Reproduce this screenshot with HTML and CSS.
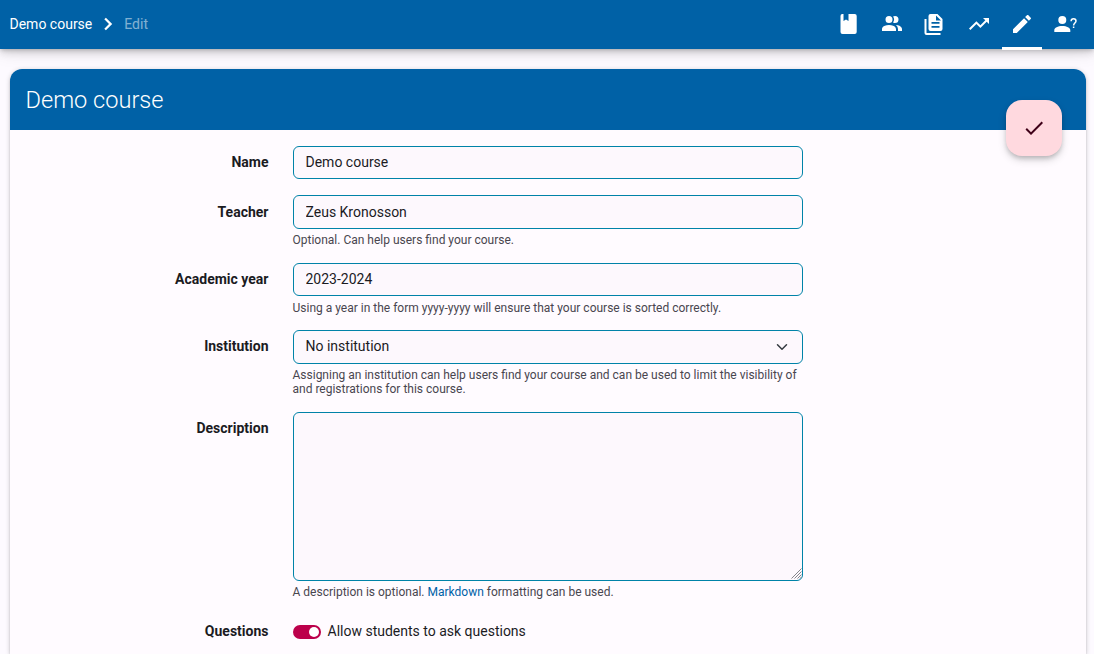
FILE: index.html
```html
<!DOCTYPE html>
<html lang="en">
<head>
<meta charset="utf-8">
<title>Edit - Demo course</title>
<link rel="stylesheet" href="styles.css">
</head>
<body>
<header class="navbar">
  <nav class="crumbs">
    <a class="crumb" href="#">Demo course</a>
    <svg class="chevron" viewBox="0 0 24 24"><path d="M8.300 16.700 13 12 8.300 7.300 9.900 5.700 16.200 12l-6.300 6.300z"/></svg>
    <span class="crumb-current">Edit</span>
  </nav>
  <nav class="tabs">
    <a class="tab" href="#"><svg class="icon" viewBox="0.500 0 24 24"><path d="M5.800 2H7v7l2.500-1.500L12 9V2h6.200a2 2 0 0 1 2 2v16a2 2 0 0 1-2 2H6a2 2 0 0 1-2-2V4a2 2 0 0 1 1.800-2z"/></svg></a>
    <a class="tab" href="#"><svg class="icon" viewBox="0 0 24 24"><path d="M16 17v2H2v-2s0-4 7-4 7 4 7 4M12.500 7.500A3.500 3.500 0 1 0 9 11a3.500 3.500 0 0 0 3.500-3.500M15.940 13A5.320 5.320 0 0 1 18 17v2h4v-2s0-3.630-6.060-4M15 4a3.390 3.390 0 0 0-1.930.590 5 5 0 0 1 0 5.820A3.390 3.390 0 0 0 15 11a3.500 3.500 0 0 0 0-7z"/></svg></a>
    <a class="tab" href="#"><svg class="icon" viewBox="0 0 24 24"><path d="M1.500 7v14a2 2 0 0 0 2 2h14v-2h-14V7z"/><path fill-rule="evenodd" d="M7.500 2h7l5 5v10a2 2 0 0 1-2 2h-10a2 2 0 0 1-2-2V4a2 2 0 0 1 2-2zm5.500 1.500v5h5zM8.500 10v1.700h8V10zm0 4v1.700h8V14z"/></svg></a>
    <a class="tab" href="#"><svg class="icon" viewBox="0 0 24 24"><path d="m16 6 2.290 2.290-4.880 4.880-4-4L2 16.590 3.410 18l6-6 4 4 6.300-6.290L22 12V6z"/></svg></a>
    <a class="tab tab-active" href="#"><svg class="icon" viewBox="0 0 24 24"><path d="M20.710 7.040c.390-.390.390-1.040 0-1.410l-2.340-2.340c-.370-.390-1.020-.390-1.410 0l-1.840 1.830 3.750 3.750M3 17.250V21h3.750L17.810 9.930l-3.750-3.750z"/></svg></a>
    <a class="tab" href="#"><svg class="icon" viewBox="0.700 0 24 24"><path d="M9 4a4 4 0 1 1 0 8 4 4 0 0 1 0-8m0 10c4.420 0 8 1.790 8 4v2H1v-2c0-2.210 3.580-4 8-4"/><path class="question" d="M17.800 9.200C17.800 7.500 18.900 6.700 20.300 6.700S22.700 7.600 22.700 9C22.700 11 20.300 11.200 20.300 13.500M20.300 14.500V16"/></svg></a>
  </nav>
</header>
<main class="card">
  <div class="card-title">
    <h2 class="title">Demo course</h2>
    <button class="fab" type="button"><svg class="icon" viewBox="0 0 24 24"><path d="M21 7 9 19l-5.500-5.500 1.410-1.410L9 16.170 19.590 5.590z"/></svg></button>
  </div>
  <form class="form">
    <div class="row">
      <label class="label" for="name">Name</label>
      <div class="field"><input class="control raised" id="name" value="Demo course"></div>
    </div>
    <div class="row">
      <label class="label" for="teacher">Teacher</label>
      <div class="field"><input class="control" id="teacher" value="Zeus Kronosson"><p class="help">Optional. Can help users find your course.</p></div>
    </div>
    <div class="row">
      <label class="label" for="year">Academic year</label>
      <div class="field"><input class="control raised" id="year" value="2023-2024"><p class="help">Using a year in the form yyyy-yyyy will ensure that your course is sorted correctly.</p></div>
    </div>
    <div class="row">
      <label class="label" for="institution">Institution</label>
      <div class="field">
        <div class="control select" id="institution"><span>No institution</span><svg class="caret" viewBox="0 0 16 16"><path d="m2 5 6 6 6-6"/></svg></div>
        <p class="help">Assigning an institution can help users find your course and can be used to limit the visibility of and registrations for this course.</p>
      </div>
    </div>
    <div class="row">
      <label class="label" for="description">Description</label>
      <div class="field">
        <div class="area-wrap"><textarea class="control area" id="description"></textarea><svg class="grip" viewBox="0 0 11 11"><path d="M.5 10.500l10-10M3.500 10.500l7-7M6.500 10.500l4-4M9 10.500l1.500-1.500"/></svg></div>
        <p class="help">A description is optional. <a class="link" href="#">Markdown</a> formatting can be used.</p>
      </div>
    </div>
    <div class="row">
      <span class="label">Questions</span>
      <div class="field check"><span class="switch"><span class="knob"></span></span><span>Allow students to ask questions</span></div>
    </div>
  </form>
</main>
</body>
</html>
```
FILE: styles.css
```css
* { box-sizing: border-box; }
html { overflow: hidden; }
body {
  margin: 0;
  height: 654px;
  overflow: hidden;
  background: #fdfaff;
  color: #1b1b1f;
  font: 14px/20px Roboto, sans-serif;
}
a { color: inherit; text-decoration: none; }
.navbar {
  position: relative;
  display: flex;
  justify-content: space-between;
  height: 49px;
  padding: 0 8.500px 0 9.500px;
  background: #0061a6;
  color: #fff;
  box-shadow: 0 2px 4px -1px rgba(0,0,0,.2), 0 4px 8px rgba(0,0,0,.12), 0 1px 20px rgba(0,0,0,.12);
}
.crumbs { display: flex; align-items: center; height: 48px; }
.chevron { width: 24px; height: 24px; margin: 0 4px; fill: #fff; }
.crumb-current { opacity: .5; }
.tabs { display: flex; gap: 3.400px; }
.tab { display: flex; justify-content: center; width: 40px; height: 50px; padding-top: 12px; }
.tab-active { border-bottom: 3px solid #fff; }
.icon { display: block; width: 24px; height: 24px; fill: currentColor; }
.question { fill: none; stroke: currentColor; stroke-width: 1.500; }
.card {
  margin: 20px 8px 0 10px;
  height: 585px;
  border-radius: 12px 12px 0 0;
  background: #fffbff;
  box-shadow: 0 2px 2px rgba(0,0,0,.14), 0 3px 1px -2px rgba(0,0,0,.12), 0 1px 5px rgba(0,0,0,.2);
}
.card-title {
  position: relative;
  height: 61px;
  padding: 17px 16px 0 15.500px;
  border-radius: 12px 12px 0 0;
  background: #0061a6;
  color: #fff;
}
.title { margin: 0; font-size: 23.600px; line-height: 29px; font-weight: 300; }
.fab {
  position: absolute;
  right: 24px;
  bottom: -26px;
  display: flex;
  align-items: center;
  justify-content: center;
  width: 56px;
  height: 56px;
  padding: 0 1px 0 0;
  border: 0;
  border-radius: 16px;
  background: #ffd9df;
  color: #3f0018;
  box-shadow: 0 3px 5px -1px rgba(0,0,0,.2), 0 4px 8px rgba(0,0,0,.14);
}
.form { display: grid; gap: 16px; padding: 16px; }
.row { display: grid; grid-template-columns: 242.500px 510.500px; column-gap: 24px; }
.label { padding-top: 6.150px; text-align: right; font-weight: 700; }
.field { min-width: 0; }
.control {
  display: block;
  width: 100%;
  height: 33.400px;
  margin: 0;
  padding: 5px 12px;
  border: 1px solid #0083a8;
  border-radius: 6px;
  outline: 0;
  background: #fdf8fd;
  color: #1b1b1f;
  font: inherit;
}
.raised { padding-bottom: 6px; }
.select { display: flex; justify-content: space-between; }
.caret { width: 12px; height: 12px; margin: 5px 2px 0 0; fill: none; stroke: #343a40; stroke-width: 2; stroke-linecap: round; stroke-linejoin: round; }
.area-wrap { position: relative; }
.area { height: 169px; resize: none; }
.grip { position: absolute; right: 1px; bottom: 2px; width: 11px; height: 11px; fill: none; stroke: #85858a; stroke-width: 1; }
.help { margin: 4.350px 0 -.300px; font-size: 12px; line-height: 14px; color: #49464f; }
.link { color: #0061a6; }
.check { display: flex; align-items: center; gap: 7px; padding-top: 6px; height: 26px; }
.switch { display: flex; align-items: center; justify-content: flex-end; width: 28px; height: 14px; margin-top: 2px; padding: 2px; border-radius: 7px; background: #bc004b; }
.knob { width: 10px; height: 10px; border-radius: 50%; background: #fff; }
```
